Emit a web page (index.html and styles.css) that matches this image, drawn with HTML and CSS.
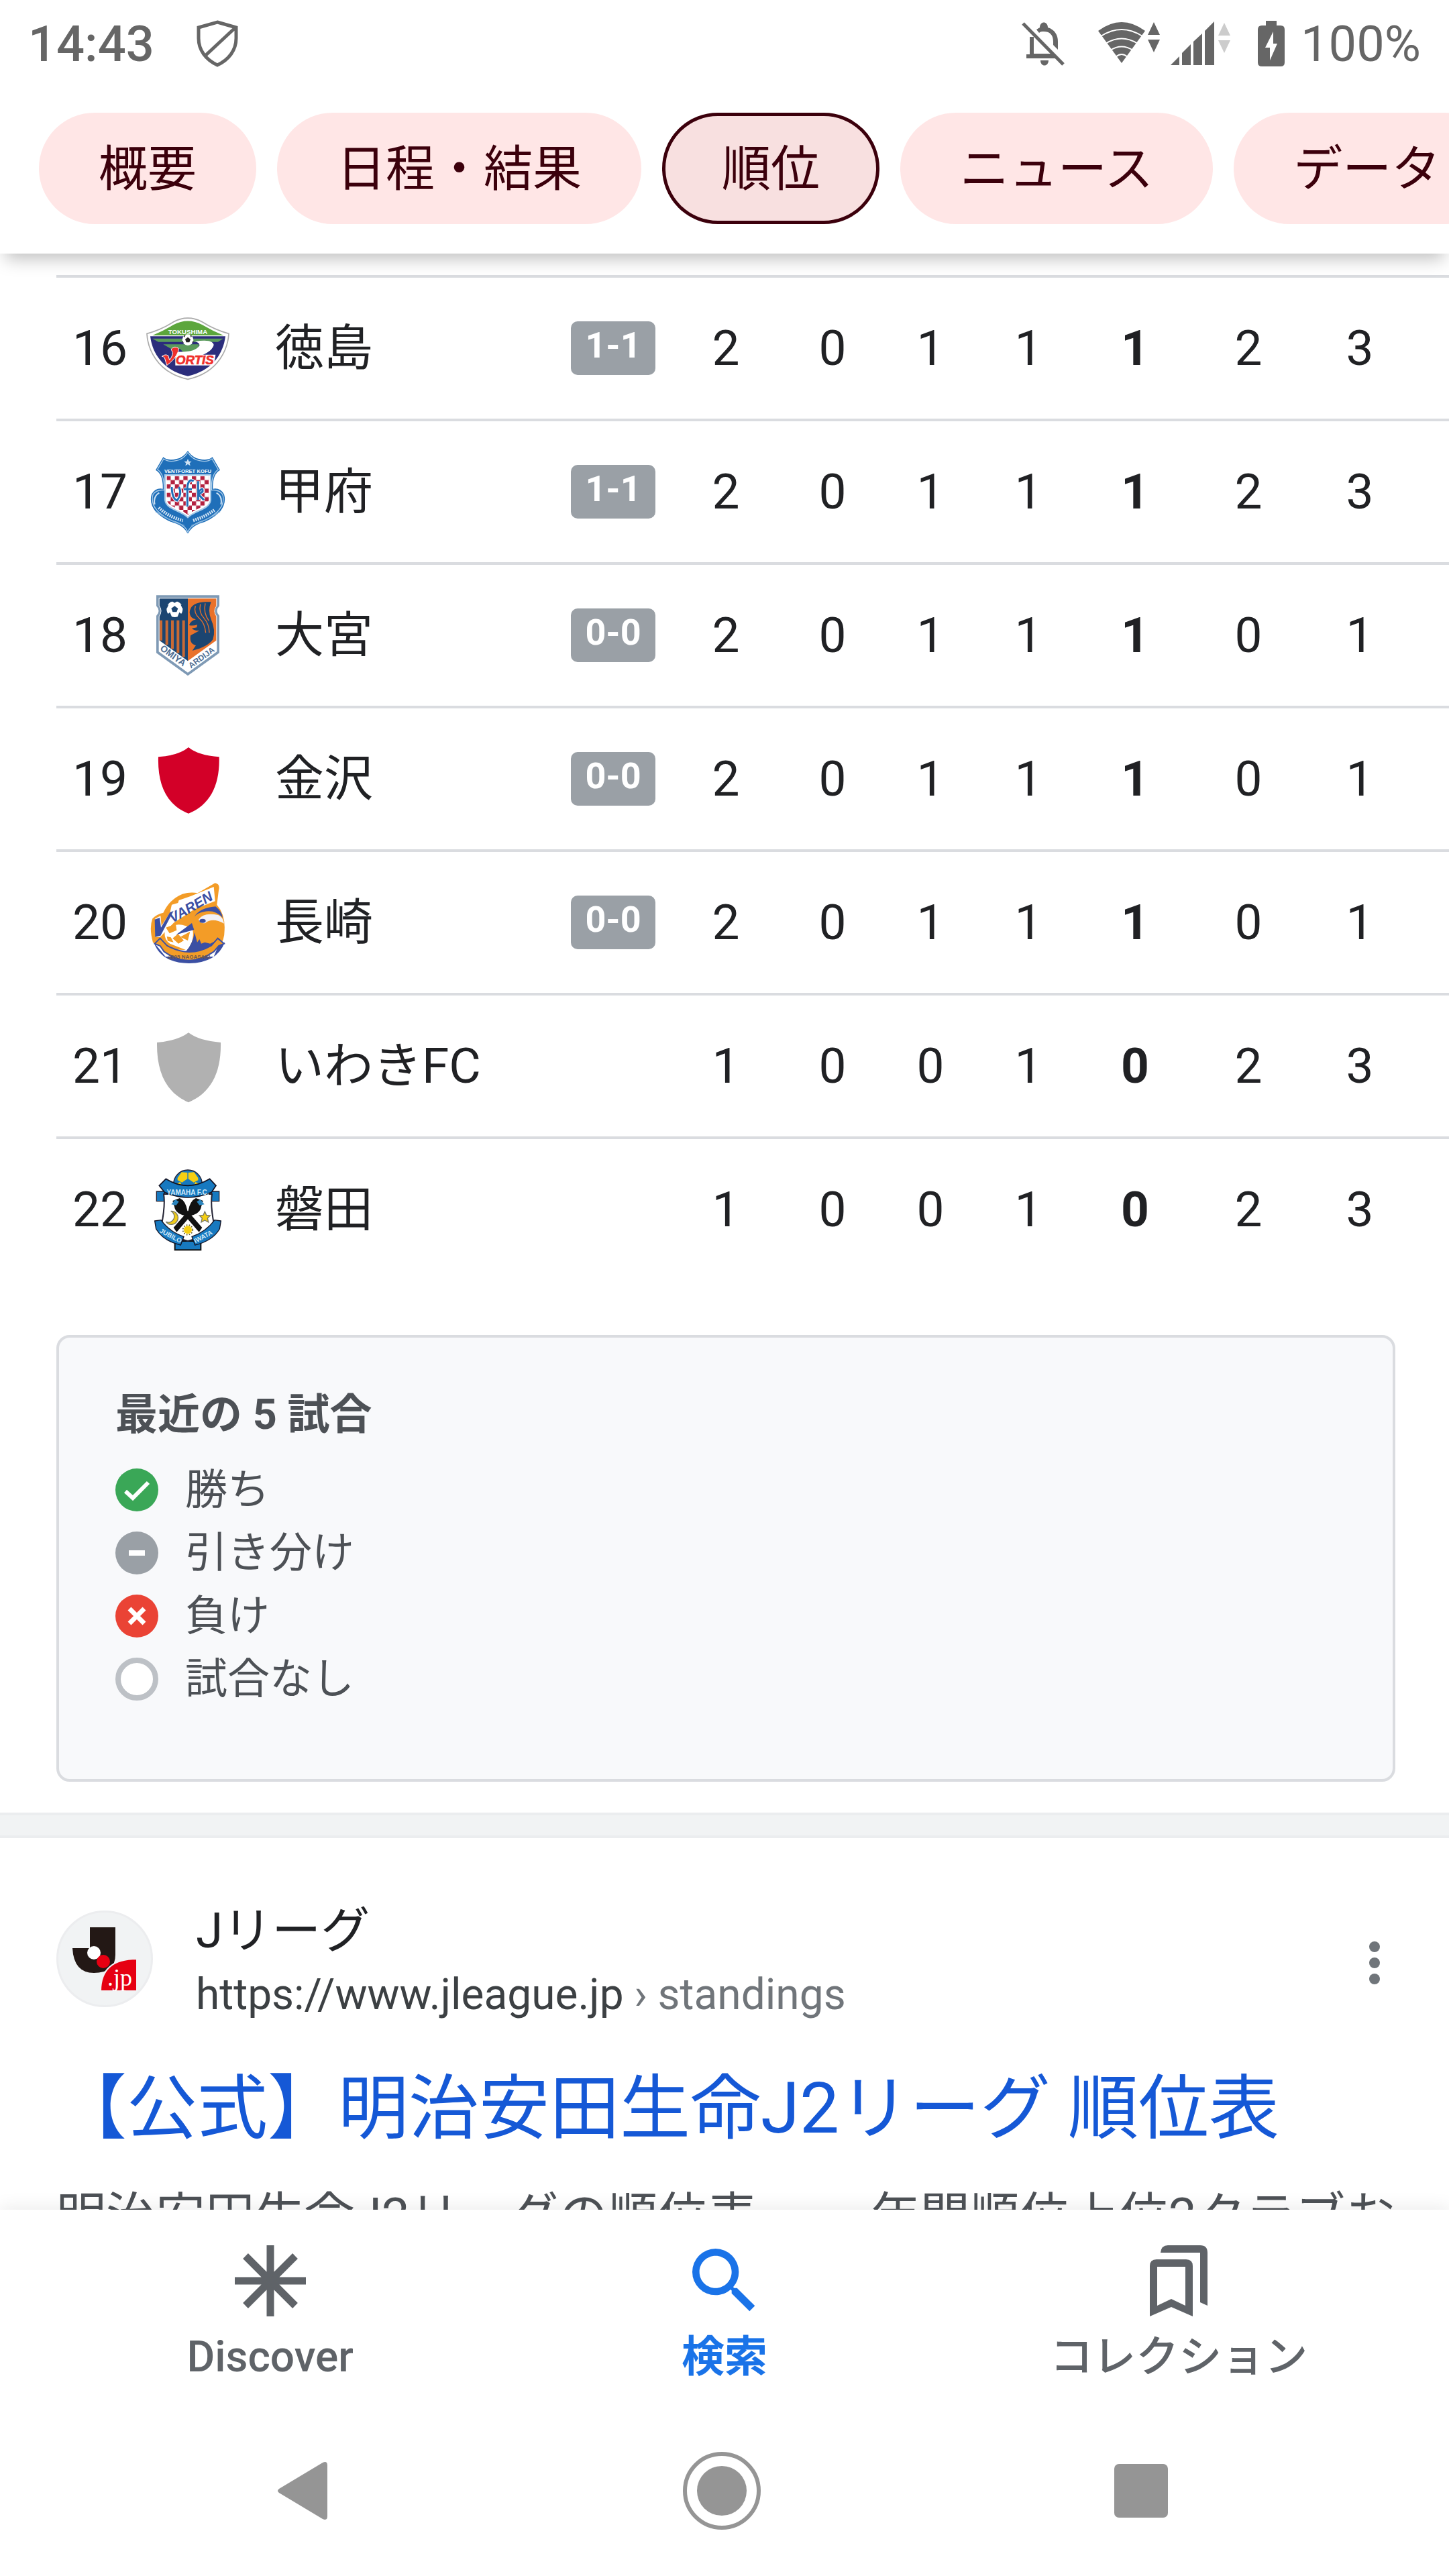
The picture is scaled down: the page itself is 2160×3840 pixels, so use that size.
FILE: index.html
```html
<!DOCTYPE html>
<html lang="ja">
<head>
    <meta charset="UTF-8">
    <meta name="viewport" content="width=device-width, initial-scale=1.0">
    <title>J2リーグ 順位</title>
    <link rel="stylesheet" href="styles.css">
</head>
<body>
    <header class="header">
        <!-- Status bar -->
        <div class="status">
            <span class="clock">14:43</span>
            <svg class="shield" viewBox="0 0 64 72" aria-hidden="true">
                <path d="M32 4 L60 12 V28 C60 46 49 60 32 68 C15 60 4 46 4 28 V12 Z M59 12 L15 53" fill="none" stroke="#666" stroke-width="5"/>
            </svg>
            <svg class="bell" viewBox="0 0 68 68" aria-hidden="true">
                <path d="M29 10 C29 0 41 0 41 10 C51 13 56 21 56 31 V43 L49 36 V31 C49 20 43 16 35 16 C32 16 30 16 28 18 L24 13 Z M30 59 H42 C42 69 30 69 30 59 Z" fill="#666"/>
                <path d="M17 24 V52 H52 M9 53 H52" fill="none" stroke="#666" stroke-width="6"/>
                <path d="M4 4 L64 65" stroke="#666" stroke-width="5"/>
            </svg>
            <svg class="wifi" viewBox="0 0 92 66" aria-hidden="true">
                <path d="M0 14 Q35 -12 70 14 L35 62 Z" fill="#666"/>
                <path d="M4 22 Q35 2 66 22 M11 33 Q35 18 59 33 M18 43 Q35 32 52 43 M26 53 Q35 45 44 53" fill="none" stroke="#fff" stroke-width="2"/>
                <path d="M74 20 L83 1 L92 20 Z M74 27 H92 L83 46 Z" fill="#666"/>
            </svg>
            <svg class="signal" viewBox="0 0 90 66" aria-hidden="true">
                <path d="M0 65 L13 52 V65 Z M17 47 L30 34 V65 H17 Z M34 30 L47 18 V65 H34 Z M51 14 L65 0 V65 H51 Z" fill="#666"/>
                <path d="M71 21 L80 2 L89 21 Z M71 28 H89 L80 47 Z" fill="#ccc"/>
            </svg>
            <svg class="battery" viewBox="0 0 40 68" aria-hidden="true">
                <path d="M12 0 H28 V7 H34 Q40 7 40 13 V62 Q40 68 34 68 H6 Q0 68 0 62 V13 Q0 7 6 7 H12 Z" fill="#666"/>
                <path d="M23 16 L11 40 H18 V59 L29 34 H23 Z" fill="#fff"/>
            </svg>
            <span class="percent">100%</span>
        </div>

        <nav class="chips">
            <a class="chip" href="#">概要</a>
            <a class="chip" href="#">日程・結果</a>
            <a class="chip active" href="#">順位</a>
            <a class="chip" href="#">ニュース</a>
            <a class="chip" href="#">データ</a>
        </nav>
    </header>

    <main class="content">
        <!-- Standings -->
        <table class="standings">
            <colgroup>
                <col class="col-rank">
                <col class="col-crest">
                <col class="col-name">
                <col class="col-score">
                <col class="col-played">
                <col class="col-won">
                <col class="col-drawn">
                <col class="col-lost">
                <col class="col-points">
                <col class="col-for">
                <col class="col-against">
            </colgroup>
            <tbody>
                <tr>
                    <td class="rank">16</td>
                    <td>
                        <svg class="crest" viewBox="54 51 372 372" aria-hidden="true">
                            <path d="M57 172 Q120 155 175 120 Q240 85 305 120 Q360 155 423 172 C420 230 385 345 240 376 C95 345 60 230 57 172 Z" fill="#fff" stroke="#aaa" stroke-width="5"/>
                            <path d="M82 180 Q130 160 175 133 Q240 98 305 133 Q350 160 400 180 Z" fill="#5ca63c"/>
                            <path d="M72 184 H408 C400 250 360 335 240 362 C120 335 80 250 72 184 Z" fill="#2b2d7c"/>
                            <path d="M82 194 H398 L375 209 H108 Z M130 220 H290 Q290 252 220 256 L205 240 H165 Z" fill="#5a9a5c"/>
                            <path d="M272 207 Q350 195 356 222 Q350 250 300 270 H170 L178 252 Q270 260 292 226 Q294 212 272 207 Z" fill="#fff"/>
                            <circle cx="240" cy="200" r="25" fill="#fff"/>
                            <path d="M240 188 L252 197 L247 211 H233 L228 197 Z M222 182 L230 178 L226 190 Z M258 182 L250 178 L254 190 Z M216 204 L222 214 L214 210 Z M264 204 L258 214 L266 210 Z" fill="#222"/>
                            <text x="240" y="174" text-anchor="middle" class="logo-text" font-size="29" fill="#fff">TOKUSHIMA</text>
                            <path d="M184 266 H364 L356 314 H184 Z" fill="#fff"/>
                            <text x="186" y="310" class="logo-text" font-size="56" font-style="italic" fill="#f0302c" stroke="#f0302c" stroke-width="2">ORTIS</text>
                            <path d="M124 274 Q138 262 152 270 L158 290 Q180 262 168 248 Q160 240 180 232 Q206 230 196 254 Q184 286 146 314 L136 280 Q130 274 124 274 Z" fill="#f0302c" stroke="#fff" stroke-width="3"/>
                        </svg>
                    </td>
                    <td class="name">徳島</td>
                    <td><span class="score">1-1</span></td>
                    <td>2</td><td>0</td><td>1</td><td>1</td><td class="points">1</td><td>2</td><td class="last">3</td>
                </tr>
                <tr>
                    <td class="rank">17</td>
                    <td>
                        <svg class="crest" viewBox="54 693 372 372" aria-hidden="true">
                            <defs>
                                <pattern id="checks" x="144" y="808" width="38" height="38" patternUnits="userSpaceOnUse">
                                    <rect width="38" height="38" fill="#fff"/>
                                    <path d="M0 0 H19 V19 H0 Z M19 19 H38 V38 H19 Z" fill="#b3213f"/>
                                </pattern>
                            </defs>
                            <path d="M240 696 Q262 728 290 732 Q330 742 350 724 L384 782 Q350 800 352 866 Q384 860 402 890 Q414 930 384 968 Q340 1010 290 1022 Q250 1040 240 1070 Q230 1040 190 1022 Q140 1010 96 968 Q66 930 78 890 Q96 860 128 866 Q130 800 96 782 L130 724 Q150 742 190 732 Q218 728 240 696 Z" fill="#1f6fb9"/>
                            <path d="M240 704 Q262 736 292 740 Q328 748 348 732 L376 780 Q344 800 346 872 Q380 868 396 892 Q406 930 378 962 Q340 1002 288 1016 Q248 1034 240 1060 Q232 1034 192 1016 Q140 1002 102 962 Q74 930 84 892 Q100 868 134 872 Q136 800 104 780 L132 732 Q152 748 188 740 Q218 736 240 704 Z" fill="none" stroke="#a9cbe8" stroke-width="4"/>
                            <path d="M138 804 H342 V916 C336 960 270 962 240 994 C210 962 144 960 138 916 Z" fill="#fff" stroke="#a9cbe8" stroke-width="6"/>
                            <path d="M146 810 H334 V914 C328 950 270 952 240 984 C210 952 152 950 146 914 Z" fill="url(#checks)"/>
                            <path d="M168 858 Q170 912 192 918 Q216 888 200 858 M266 832 Q244 818 238 856 V946 M222 868 H258 M286 832 V916 M286 884 Q308 852 306 878 L288 892 L312 916" fill="none" stroke="#fff" stroke-width="15"/>
                            <path d="M168 858 Q170 912 192 918 Q216 888 200 858 M266 832 Q244 818 238 856 V946 M222 868 H258 M286 832 V916 M286 884 Q308 852 306 878 L288 892 L312 916" fill="none" stroke="#1f6fb9" stroke-width="9"/>
                            <path d="M240 732 L245 743 L257 744 L248 751 L251 763 L240 756 L229 763 L232 751 L223 744 L235 743 Z" fill="#cfe2f3"/>
                            <text x="240" y="794" text-anchor="middle" class="logo-text" font-size="23" fill="#fff">VENTFORET KOFU</text>
                            <path d="M110 950 Q150 990 218 1008 M264 1008 Q320 990 360 960" fill="none" stroke="#cfe2f3" stroke-width="14" stroke-dasharray="6 4"/>
                            <path d="M92 936 Q84 900 112 884 M388 936 Q396 900 368 884" fill="none" stroke="#cfe2f3" stroke-width="6"/>
                            <path d="M96 968 Q160 1010 224 1030 M384 968 Q320 1010 256 1030" fill="none" stroke="#7fb1dc" stroke-width="4"/>
                        </svg>
                    </td>
                    <td class="name">甲府</td>
                    <td><span class="score">1-1</span></td>
                    <td>2</td><td>0</td><td>1</td><td>1</td><td class="points">1</td><td>2</td><td class="last">3</td>
                </tr>
                <tr>
                    <td class="rank">18</td>
                    <td>
                        <svg class="crest" viewBox="54 75 372 372" aria-hidden="true">
                            <path d="M99 82 H381 V130 Q360 152 381 174 V340 L240 442 L99 340 V174 Q120 152 99 130 Z" fill="#7f9ab5"/>
                            <path d="M110 94 H370 V128 Q352 152 370 176 V334 L240 428 L110 334 V176 Q128 152 110 128 Z" fill="#fff"/>
                            <path d="M113 97 H240 V376 L113 284 V176 Q130 152 113 128 Z" fill="#1c4571"/>
                            <path d="M240 97 H367 V130 Q350 152 367 176 V284 L240 376 Z" fill="#e9712a"/>
                            <path d="M120 194 V284 M146 194 V304 M171 194 V322 M196 194 V340 M221 194 V358" stroke="#c96a35" stroke-width="12"/>
                            <circle cx="181" cy="144" r="36" fill="#fff"/>
                            <path d="M181 130 L196 141 L190 157 H172 L166 141 Z M164 106 H198 L181 116 Z M138 128 L154 124 L146 142 Z M224 128 L208 124 L216 142 Z M148 168 L160 158 L168 178 L158 184 Z M214 168 L202 158 L194 178 L204 184 Z" fill="#1c4571"/>
                            <path d="M344 112 Q250 106 248 160 Q250 186 276 190 Q252 196 246 216 Q262 220 282 214 L280 226 L258 230 Q270 242 292 240 L252 262 Q246 300 276 306 L260 330 Q330 312 352 280 Q366 240 344 190 Q328 150 344 112 Z" fill="#1c4571"/>
                            <path d="M274 130 Q264 160 292 186 Q316 206 320 250 M296 122 Q288 160 312 184 Q336 212 336 250 M318 118 Q308 160 334 196" fill="none" stroke="#e9712a" stroke-width="4"/>
                            <text x="113" y="325" transform="rotate(36 113 325)" class="logo-text" font-size="41" fill="#4d6d92">OMIYA</text>
                            <text x="254" y="410" transform="rotate(-36 254 410)" class="logo-text" font-size="36" fill="#4d6d92">ARDIJA</text>
                        </svg>
                    </td>
                    <td class="name">大宮</td>
                    <td><span class="score">0-0</span></td>
                    <td>2</td><td>0</td><td>1</td><td>1</td><td class="points">1</td><td>0</td><td class="last">1</td>
                </tr>
                <tr>
                    <td class="rank">19</td>
                    <td>
                        <svg class="crest" viewBox="54 717 372 372" aria-hidden="true">
                            <path d="M108 805 Q200 798 243 762 Q286 798 380 805 C384 930 340 1020 243 1058 C146 1020 104 930 108 805 Z" fill="#d30028"/>
                        </svg>
                    </td>
                    <td class="name">金沢</td>
                    <td><span class="score">0-0</span></td>
                    <td>2</td><td>0</td><td>1</td><td>1</td><td class="points">1</td><td>0</td><td class="last">1</td>
                </tr>
                <tr>
                    <td class="rank">20</td>
                    <td>
                        <svg class="crest" viewBox="54 69 372 372" aria-hidden="true">
                            <path d="M88 344 Q120 436 245 438 Q370 436 405 344 L380 350 L356 408 H140 Z" fill="#3b4fa3"/>
                            <path d="M84 345 Q66 280 82 238 Q100 218 130 212 Q160 150 216 128 Q250 118 284 124 L362 79 Q386 84 378 112 L370 176 Q408 220 404 290 Q404 340 380 356 L340 380 L140 376 Z" fill="#f39c27"/>
                            <path d="M94 238 L118 226 L122 270 L160 212 L168 176 L196 168 L200 156 L252 138 L356 96 L362 160 L270 196 L178 256 L116 320 H96 Z" fill="#fff"/>
                            <path d="M92 242 L114 234 L120 278 L160 210 L176 204 L118 314 L94 320 Z" fill="#3b4fa3"/>
                            <text x="172" y="258" transform="rotate(-30 172 258)" class="logo-text" font-size="62" font-style="italic" fill="#3b4fa3">VAREN</text>
                            <path d="M268 232 Q290 190 364 184 Q392 206 396 234 Q360 196 310 208 Q280 214 268 232 Z" fill="#3b4fa3"/>
                            <path d="M288 242 Q310 208 376 222 Q398 232 402 260 Q350 232 318 258 Q296 262 288 242 Z" fill="#f3f1f5"/>
                            <ellipse cx="306" cy="248" rx="14" ry="9" fill="#3b4fa3"/>
                            <path d="M138 290 Q200 240 262 290 Q270 340 236 380 L160 350 Q130 330 138 290 Z" fill="#fff"/>
                            <path d="M142 278 L186 262 L190 290 L158 304 Z M172 326 L196 306 L222 336 L198 350 Z M206 320 L250 296 L240 336 Z M146 318 L164 322 L176 344 L150 338 Z" fill="#f39c27"/>
                            <path d="M188 310 L258 258 L268 288 Z M232 384 Q262 350 270 300 L282 344 L292 330 L300 350 L316 344 L340 350 L360 340 L340 376 Q290 390 232 384 Z" fill="#3b4fa3"/>
                            <path d="M92 350 L116 326 L146 358 Q246 416 346 358 L374 326 L402 350 L378 360 L356 386 Q246 464 134 386 L116 360 Z" fill="#f39c27" stroke="#3b4fa3" stroke-width="6"/>
                            <text x="246" y="416" text-anchor="middle" class="logo-text" font-size="24" fill="#6e5547">2005 NAGASAKI</text>
                        </svg>
                    </td>
                    <td class="name">長崎</td>
                    <td><span class="score">0-0</span></td>
                    <td>2</td><td>0</td><td>1</td><td>1</td><td class="points">1</td><td>0</td><td class="last">1</td>
                </tr>
                <tr>
                    <td class="rank">21</td>
                    <td>
                        <svg class="crest" viewBox="54 711 372 372" aria-hidden="true">
                            <path d="M102 792 Q196 784 243 748 Q290 784 387 792 C390 930 342 1018 243 1060 C146 1018 100 930 102 792 Z" fill="#b1b1b1"/>
                        </svg>
                    </td>
                    <td class="name">いわきFC</td>
                    <td></td>
                    <td>1</td><td>0</td><td>0</td><td>1</td><td class="points">0</td><td>2</td><td class="last">3</td>
                </tr>
                <tr>
                    <td class="rank">22</td>
                    <td>
                        <svg class="crest" viewBox="54 1353 372 372" aria-hidden="true">
                            <circle cx="240" cy="1426" r="64" fill="#1779c0" stroke="#223" stroke-width="4"/>
                            <path d="M194 1398 L212 1372 L238 1374 L238 1402 L214 1418 L194 1408 Z M286 1398 L268 1372 L242 1374 L242 1402 L266 1418 L286 1408 Z M186 1424 L206 1416 L218 1440 L196 1452 Z M294 1424 L274 1416 L262 1440 L284 1452 Z" fill="#f6cf12"/>
                            <path d="M182 1680 H298 V1720 H182 Z" fill="#1779c0" stroke="#111" stroke-width="6"/>
                            <path d="M100 1458 H136 V1502 H100 Z M346 1458 H380 V1502 H346 Z" fill="#1779c0" stroke="#223" stroke-width="4"/>
                            <path d="M132 1470 H348 Q340 1520 358 1610 Q330 1656 240 1680 Q150 1656 122 1610 Q140 1520 132 1470 Z" fill="#fff" stroke="#223" stroke-width="6"/>
                            <path d="M112 1432 L142 1402 Q240 1462 338 1402 L366 1432 L346 1462 Q240 1508 136 1462 Z" fill="#1779c0" stroke="#112" stroke-width="5"/>
                            <path d="M172 1500 L204 1488 Q230 1500 238 1544 L304 1620 L290 1640 L226 1566 Q184 1556 180 1526 Z" fill="#111"/>
                            <path d="M308 1500 L276 1488 Q250 1500 242 1544 L176 1620 L190 1640 L254 1566 Q296 1556 300 1526 Z" fill="#111"/>
                            <path d="M166 1516 L184 1494 L200 1504 L188 1520 Z M314 1516 L296 1494 L280 1504 L292 1520 Z" fill="#2a84bd"/>
                            <path d="M164 1546 A30 30 0 1 1 142 1594 A26 26 0 0 0 164 1546 Z" fill="#f0cc18" stroke="#776" stroke-width="4"/>
                            <path d="M316 1548 L323 1564 L340 1566 L328 1578 L332 1596 L316 1587 L300 1596 L304 1578 L292 1566 L309 1564 Z" fill="#f6cf12" stroke="#776" stroke-width="4"/>
                            <circle cx="240" cy="1630" r="18" fill="#f6cf12"/>
                            <circle cx="240" cy="1630" r="22" fill="none" stroke="#665c22" stroke-width="5" stroke-dasharray="5 7"/>
                            <path d="M92 1590 L120 1586 Q160 1640 222 1660 L208 1698 Q130 1680 98 1626 Z" fill="#1779c0" stroke="#112" stroke-width="4"/>
                            <path d="M388 1590 L360 1586 Q320 1640 258 1660 L272 1698 Q350 1680 382 1626 Z" fill="#1779c0" stroke="#112" stroke-width="4"/>
                            <text x="240" y="1474" text-anchor="middle" class="logo-text" font-size="30" fill="#d5ebf8">YAMAHA F.C.</text>
                            <text x="112" y="1640" transform="rotate(28 112 1640)" class="logo-text" font-size="29" fill="#d5ebf8">JUBILO</text>
                            <text x="274" y="1690" transform="rotate(-28 274 1690)" class="logo-text" font-size="29" fill="#d5ebf8">IWATA</text>
                        </svg>
                    </td>
                    <td class="name">磐田</td>
                    <td></td>
                    <td>1</td><td>0</td><td>0</td><td>1</td><td class="points">0</td><td>2</td><td class="last">3</td>
                </tr>
            </tbody>
        </table>

        <!-- Legend for recent results -->
        <section class="legend">
            <h2>最近の 5 試合</h2>
            <ul>
                <li>
                    <svg viewBox="0 0 64 64" aria-hidden="true"><circle cx="32" cy="32" r="32" fill="#3aa757"/><path d="M15 34 L26 44 L49 21" fill="none" stroke="#fff" stroke-width="6"/></svg>
                    勝ち
                </li>
                <li>
                    <svg viewBox="0 0 64 64" aria-hidden="true"><circle cx="32" cy="32" r="32" fill="#9aa0a6"/><path d="M20 32 H44" stroke="#fff" stroke-width="8"/></svg>
                    引き分け
                </li>
                <li>
                    <svg viewBox="0 0 64 64" aria-hidden="true"><circle cx="32" cy="32" r="32" fill="#ea4335"/><path d="M21 21 L43 43 M43 21 L21 43" stroke="#fff" stroke-width="7"/></svg>
                    負け
                </li>
                <li>
                    <svg viewBox="0 0 64 64" aria-hidden="true"><circle cx="32" cy="32" r="28" fill="#fff" stroke="#bdc1c6" stroke-width="8"/></svg>
                    試合なし
                </li>
            </ul>
        </section>

        <div class="divider"></div>

        <!-- Search result -->
        <article class="result">
            <div class="source">
                <span class="favicon">
                    <svg viewBox="0 0 96 96" aria-hidden="true">
                        <path d="M26 1 H64 V42 Q64 69 32 69 Q2 69 0 32 H26 Z" fill="#231815"/>
                        <circle cx="32" cy="39" r="10" fill="#fff"/>
                        <circle cx="46" cy="52" r="10" fill="#e60012"/>
                        <path d="M42 96 Q42 48 96 48 V96 Z" fill="#e60012" stroke="#f1f3f4" stroke-width="2"/>
                        <text x="52" y="88" class="favicon-text">.jp</text>
                    </svg>
                </span>
                <div class="site">
                    <div class="site-name">Jリーグ</div>
                    <cite>https://www.jleague.jp<span> › standings</span></cite>
                </div>
                <button class="more" type="button" aria-label="その他">
                    <svg viewBox="0 0 16 64" aria-hidden="true"><circle cx="8" cy="8" r="8"/><circle cx="8" cy="32" r="8"/><circle cx="8" cy="56" r="8"/></svg>
                </button>
            </div>
            <h3><a href="#">【公式】明治安田生命J2リーグ 順位表</a></h3>
            <p>明治安田生命J2リーグの順位表。 ... 年間順位上位2クラブお</p>
        </article>
    </main>

    <!-- App navigation -->
    <nav class="tabs">
        <button class="tab" type="button">
            <svg viewBox="0 0 128 128" aria-hidden="true"><path d="M64 11 V117 M11 64 H117 M27 27 L101 101 M101 27 L27 101" fill="none" stroke="#5f6368" stroke-width="11"/></svg>
            Discover
        </button>
        <button class="tab selected" type="button">
            <svg viewBox="0 0 24 24" aria-hidden="true"><path fill="#1a73e8" d="M15.5 14h-.79l-.28-.27A6.471 6.471 0 0 0 16 9.500 6.500 6.500 0 1 0 9.500 16c1.610 0 3.090-.590 4.230-1.570l.270.280v.790l5 4.990L20.490 19l-4.990-5zm-6 0C7.010 14 5 11.990 5 9.500S7.010 5 9.500 5 14 7.010 14 9.500 11.990 14 9.500 14z"/></svg>
            検索
        </button>
        <button class="tab" type="button">
            <svg viewBox="0 0 128 128" aria-hidden="true"><path fill="#5f6368" fill-rule="evenodd" d="M31 32 H75 Q85 32 85 42 V117 L53 103 L21 117 V42 Q21 32 31 32 Z M32 43 V101 L53 91 L74 101 V43 Z M37 22 Q38 11 48 11 H96 Q107 11 107 22 V101 L96 96 V22 Z"/></svg>
            コレクション
        </button>
    </nav>

    <nav class="system">
        <button type="button" aria-label="戻る">
            <svg viewBox="0 0 120 120" aria-hidden="true"><path d="M25 57 L90 18 Q97 15 97 22 V98 Q97 105 90 102 L25 63 Q21 60 25 57 Z" fill="#959595"/></svg>
        </button>
        <button type="button" aria-label="ホーム">
            <svg viewBox="0 0 120 120" aria-hidden="true"><circle cx="60" cy="60" r="55" fill="none" stroke="#959595" stroke-width="6"/><circle cx="60" cy="60" r="37" fill="#959595"/></svg>
        </button>
        <button type="button" aria-label="履歴">
            <svg viewBox="0 0 120 120" aria-hidden="true"><rect x="20" y="20" width="80" height="80" rx="7" fill="#959595"/></svg>
        </button>
    </nav>
</body>
</html>
```

FILE: styles.css
```css
* {
    box-sizing: border-box;
}

body {
    margin: 0;
    height: 100vh;
    display: flex;
    flex-direction: column;
    background: #fff;
    color: #202124;
    font-family: Roboto, "Noto Sans CJK JP", sans-serif;
    font-size: 73px;
    overflow: hidden;
}

a {
    color: inherit;
    text-decoration: none;
}

button {
    padding: 0;
    border: 0;
    background: none;
    font-family: inherit;
    cursor: pointer;
}

svg {
    display: block;
    flex: none;
}

.logo-text {
    font-family: "Liberation Sans", sans-serif;
    font-weight: bold;
}

/* Header */
.header {
    position: relative;
    z-index: 1;
    flex: none;
    background: #fff;
    box-shadow: 0 16px 24px -8px rgba(0, 0, 0, 0.25);
}

.status {
    display: flex;
    align-items: center;
    height: 130px;
    padding: 0 42px;
    color: #666;
    font-size: 74px;
}

.clock {
    font-weight: 500;
}

.shield {
    width: 64px;
    height: 72px;
    margin-left: 62px;
}

.bell {
    width: 68px;
    height: 68px;
    margin-left: auto;
}

.wifi {
    width: 92px;
    height: 66px;
    margin-left: 48px;
}

.signal {
    width: 90px;
    height: 66px;
    margin-left: 16px;
}

.battery {
    width: 40px;
    height: 68px;
    margin: 0 24px 0 40px;
}

.chips {
    display: flex;
    gap: 31px;
    padding: 38px 0 44px 58px;
    overflow: hidden;
}

.chip {
    display: flex;
    align-items: center;
    flex: none;
    height: 166px;
    padding: 0 84px 12px;
    border: 5px solid transparent;
    border-radius: 83px;
    background: #ffe6e6;
    color: #3c000c;
}

.chip.active {
    border-color: #3c000c;
    background: #f8e0e0;
}

/* Standings */
.content {
    flex: 1;
    min-height: 0;
    padding-top: 32px;
    overflow: hidden;
}

.standings {
    width: calc(100% - 84px);
    margin-left: 84px;
    table-layout: fixed;
    border-spacing: 0;
}

.col-rank { width: 128px; }
.col-crest { width: 136px; }
.col-score { width: 188px; }
.col-played { width: 148px; }
.col-won { width: 170px; }
.col-drawn { width: 122px; }
.col-lost { width: 170px; }
.col-points { width: 148px; }
.col-for { width: 190px; }
.col-against { width: 204px; }

.standings td {
    height: 214px;
    padding: 0;
    border-top: 4px solid #dadce0;
    text-align: center;
    line-height: 84px;
}

.standings .rank {
    padding-left: 24px;
    text-align: left;
}

.standings .name {
    padding-left: 62px;
    text-align: left;
    white-space: nowrap;
}

.standings .points {
    font-weight: bold;
}

.standings .last {
    padding-right: 62px;
}

.crest {
    width: 124px;
    height: 124px;
    margin: 0 auto;
}

.score {
    display: block;
    width: 126px;
    height: 80px;
    margin: 0 auto;
    border-radius: 10px;
    background: #9aa0a6;
    color: #fff;
    font-size: 54px;
    font-weight: bold;
    line-height: 72px;
}

/* Legend */
.legend {
    margin: 82px 80px 0 84px;
    padding: 68px 84px 102px;
    border: 4px solid #dadce0;
    border-radius: 20px;
    background: #f8f9fb;
    color: #4d5156;
    font-size: 63px;
}

.legend h2 {
    margin: 0 0 18px;
    font-size: 63px;
    line-height: 94px;
}

.legend ul {
    margin: 0;
    padding: 0;
    list-style: none;
}

.legend li {
    display: flex;
    align-items: center;
    gap: 40px;
    line-height: 94px;
}

.legend svg {
    width: 64px;
    height: 64px;
}

.divider {
    height: 38px;
    margin-top: 46px;
    border: solid #ebedef;
    border-width: 4px 0;
    background: #f1f3f4;
}

/* Search result */
.result {
    padding: 90px 84px 0;
}

.source {
    display: flex;
    align-items: center;
}

.favicon {
    display: flex;
    align-items: center;
    justify-content: center;
    width: 144px;
    height: 144px;
    margin-bottom: 12px;
    border: 3px solid #ecedef;
    border-radius: 50%;
    background: #f1f3f4;
}

.favicon svg {
    width: 96px;
    height: 96px;
}

.favicon-text {
    fill: #fff;
    font-family: "Liberation Serif", serif;
    font-size: 36px;
}

.site {
    flex: 1;
    padding-left: 64px;
}

.site-name {
    line-height: 96px;
}

.site cite {
    display: block;
    color: #3c4043;
    font-size: 64px;
    font-style: normal;
    line-height: 96px;
}

.site cite span {
    color: #70757a;
}

.more {
    width: 54px;
    height: 96px;
}

.more svg {
    width: 16px;
    height: 64px;
    margin: 0 auto;
    fill: #70757a;
}

.result h3 {
    margin: 54px 0 0;
    color: #1558d6;
    font-size: 105px;
    font-weight: normal;
    line-height: 136px;
    white-space: nowrap;
}

.result p {
    margin: 44px 0 0;
    color: #4d5156;
    font-size: 74px;
    line-height: 96px;
    white-space: nowrap;
}

/* Bottom navigation */
.tabs {
    position: relative;
    display: flex;
    flex: none;
    height: 292px;
    padding: 42px 64px 0;
    background: #fff;
    box-shadow: 0 -4px 24px rgba(0, 0, 0, 0.08);
}

.tab {
    display: flex;
    flex: 1;
    flex-direction: column;
    align-items: center;
    gap: 14px;
    color: #5f6368;
    font-size: 64px;
    font-weight: 500;
    line-height: 72px;
}

.tab svg {
    width: 128px;
    height: 128px;
}

.tab.selected {
    color: #1a73e8;
    font-weight: bold;
}

.system {
    position: relative;
    display: flex;
    flex: none;
    justify-content: space-around;
    align-items: center;
    height: 254px;
    padding: 0 146px 0 138px;
    background: #fff;
}

.system svg {
    width: 120px;
    height: 120px;
}
```
